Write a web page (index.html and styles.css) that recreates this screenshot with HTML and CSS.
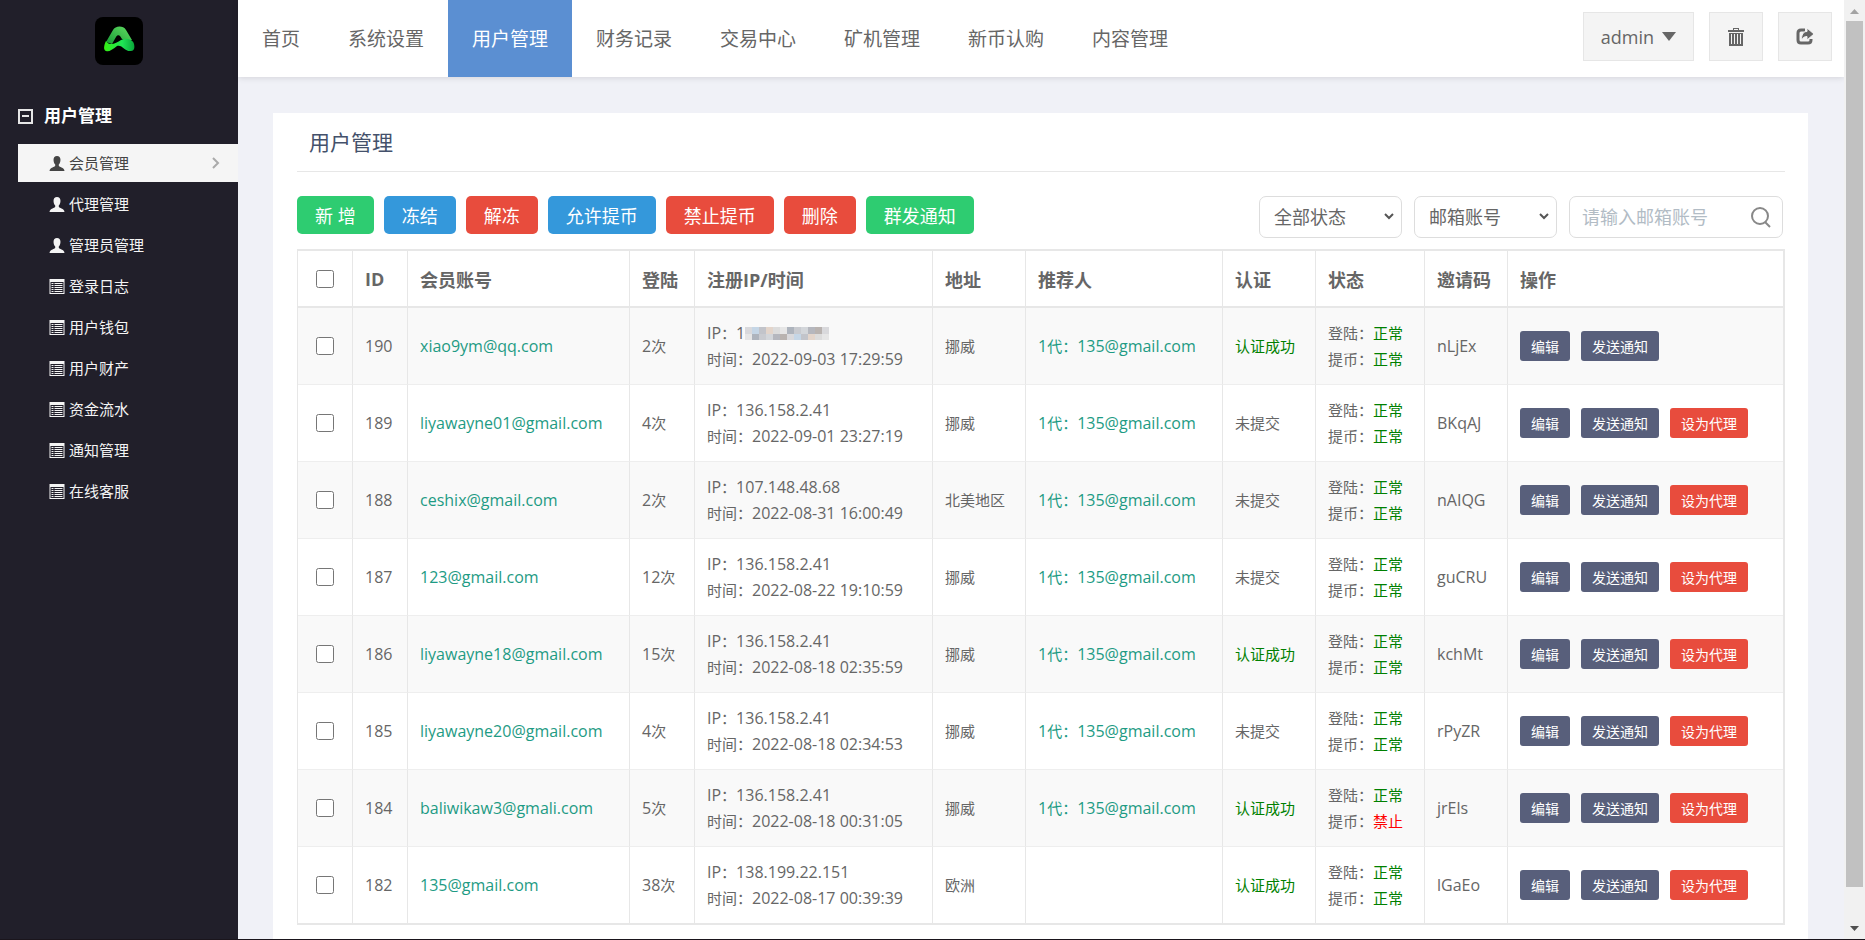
FILE: index.html
```html
<!DOCTYPE html>
<html lang="zh-CN">
<head>
    <meta charset="UTF-8">
    <meta name="viewport" content="width=device-width, initial-scale=1.0">
    <title>用户管理</title>
    <link rel="stylesheet" href="styles.css">
</head>
<body>
    <!-- Shared icons -->
    <svg class="sprite" aria-hidden="true">
        <symbol id="icon-user" viewBox="0 0 16 16">
            <path d="M8 0C5.600 0 4.300 1.700 4.300 4c0 2.300.7 4 1.800 5.100v1.300c-.4.9-1.600 1.300-2.900 1.800C1.500 12.900.2 13.600 0 16h16c-.2-2.400-1.500-3.100-3.200-3.800-1.300-.5-2.500-.9-2.900-1.800V9.100C11 8 11.700 6.300 11.700 4c0-2.300-1.300-4-3.700-4z"/>
        </symbol>
        <symbol id="icon-list" viewBox="0 0 15 15">
            <path fill-rule="evenodd" d="M0 0h15v15H0zM1 3v11h13V3zM2 4h2v1H2zM5 4h8v1H5zM2 6h2v1H2zM5 6h8v1H5zM2 8h2v1H2zM5 8h8v1H5zM2 10h2v1H2zM5 10h8v1H5zM2 12h2v1H2zM5 12h8v1H5z"/>
        </symbol>
    </svg>

    <div class="page">
        <aside class="sidebar">
            <a class="logo" href="#" aria-label="首页">
                <svg width="48" height="48" viewBox="0 0 48 48">
                    <defs>
                        <linearGradient id="top" x1="0" y1="1" x2="1" y2="0">
                            <stop offset="0" stop-color="#159a35"/>
                            <stop offset="1" stop-color="#62dc62"/>
                        </linearGradient>
                        <linearGradient id="wave" x1="0" y1="0" x2="1" y2="0">
                            <stop offset="0" stop-color="#35ee12"/>
                            <stop offset=".6" stop-color="#1fe556"/>
                            <stop offset="1" stop-color="#0aa53a"/>
                        </linearGradient>
                    </defs>
                    <rect width="48" height="48" rx="8" fill="#000"/>
                    <path d="M11 25 18 13C20 9 28 8 31 13L37 23C33 24 30 24 27 22L25 19C24 18 22 18 21 20L17 27Z" fill="url(#top)"/>
                    <path d="M11 24C15 30 21 26 26 23C31 21 38 22 39 27C40 31 39 34 36 34C30 35 27 27 22 29C17 33 14 35 11 34C8 33 9 28 11 24Z" fill="url(#wave)"/>
                </svg>
            </a>
            <h2 class="group">
                <svg width="15" height="15" viewBox="0 0 15 15"><path d="M1 1h13v13H1zM4 7h7" fill="none" stroke="#e6e6e6" stroke-width="2"/></svg>
                用户管理
            </h2>
            <nav class="menu">
                <a class="active" href="#"><svg><use href="#icon-user"/></svg>会员管理<svg class="arrow" viewBox="0 0 8 12"><path d="M1 1l5 5-5 5" fill="none" stroke="#aaa" stroke-width="2"/></svg></a>
                <a href="#"><svg><use href="#icon-user"/></svg>代理管理</a>
                <a href="#"><svg><use href="#icon-user"/></svg>管理员管理</a>
                <a href="#"><svg class="list"><use href="#icon-list"/></svg>登录日志</a>
                <a href="#"><svg class="list"><use href="#icon-list"/></svg>用户钱包</a>
                <a href="#"><svg class="list"><use href="#icon-list"/></svg>用户财产</a>
                <a href="#"><svg class="list"><use href="#icon-list"/></svg>资金流水</a>
                <a href="#"><svg class="list"><use href="#icon-list"/></svg>通知管理</a>
                <a href="#"><svg class="list"><use href="#icon-list"/></svg>在线客服</a>
            </nav>
        </aside>

        <div class="main">
            <header class="topbar">
                <nav class="topnav">
                    <a href="#">首页</a>
                    <a href="#">系统设置</a>
                    <a class="active" href="#">用户管理</a>
                    <a href="#">财务记录</a>
                    <a href="#">交易中心</a>
                    <a href="#">矿机管理</a>
                    <a href="#">新币认购</a>
                    <a href="#">内容管理</a>
                </nav>
                <div class="tools">
                    <button type="button" class="tool account">admin
                        <svg width="14" height="9" viewBox="0 0 14 9"><path d="M0 0h14L7 9z"/></svg>
                    </button>
                    <button type="button" class="tool" aria-label="清除缓存">
                        <svg width="16" height="18" viewBox="0 0 16 18">
                            <path fill-rule="evenodd" d="M5 0h6v2h5v2H0V2h5zM6 1v1h4V1zM1 5h14v13H1zM3 6v10h1V6zM6 6v10h1V6zM9 6v10h1V6zM12 6v10h1V6z"/>
                        </svg>
                    </button>
                    <button type="button" class="tool" aria-label="退出">
                        <svg width="18" height="17" viewBox="0 0 18 17">
                            <path d="M9 2H5C3 2 2 3 2 5v7c0 2 1 3 3 3h7c2 0 3-1 3-3v-1" fill="none" stroke="#666" stroke-width="3"/>
                            <path d="M11 0l7 6-7 6V8.500C8.500 8.500 7 9.500 5.500 12 5.500 7 7 3.500 11 3.500z" stroke="#f4f4f4"/>
                        </svg>
                    </button>
                </div>
            </header>

            <main class="content">
                <section class="panel">
                    <h1>用户管理</h1>
                    <div class="toolbar">
                        <div class="actions">
                            <button type="button" class="btn green">新 增</button>
                            <button type="button" class="btn blue">冻结</button>
                            <button type="button" class="btn red">解冻</button>
                            <button type="button" class="btn blue">允许提币</button>
                            <button type="button" class="btn red">禁止提币</button>
                            <button type="button" class="btn red">删除</button>
                            <button type="button" class="btn green">群发通知</button>
                        </div>
                        <form class="filters">
                            <div class="picker">
                                <select aria-label="状态"><option>全部状态</option></select>
                                <svg width="12" height="8" viewBox="0 0 12 8"><path d="M2 1l4 4 4-4"/></svg>
                            </div>
                            <div class="picker">
                                <select aria-label="查询字段"><option>邮箱账号</option></select>
                                <svg width="12" height="8" viewBox="0 0 12 8"><path d="M2 1l4 4 4-4"/></svg>
                            </div>
                            <div class="search">
                                <input type="text" placeholder="请输入邮箱账号" aria-label="邮箱账号">
                                <button type="submit" aria-label="搜索">
                                    <svg width="20" height="22" viewBox="0 0 20 22"><circle cx="9" cy="10" r="8"/><path d="M14 16l5 5"/></svg>
                                </button>
                            </div>
                        </form>
                    </div>
                    <table>
                        <thead>
                            <tr>
                                <th class="c-check"><input type="checkbox" aria-label="全选"></th>
                                <th class="c-id">ID</th>
                                <th class="c-account">会员账号</th>
                                <th class="c-login">登陆</th>
                                <th class="c-ip">注册IP/时间</th>
                                <th class="c-area">地址</th>
                                <th class="c-parent">推荐人</th>
                                <th class="c-auth">认证</th>
                                <th class="c-status">状态</th>
                                <th class="c-code">邀请码</th>
                                <th>操作</th>
                            </tr>
                        </thead>
                        <tbody id="members"></tbody>
                    </table>
                </section>
            </main>
        </div>

        <div class="scrollbar" aria-hidden="true">
            <svg width="9" height="5" viewBox="0 0 9 5"><path d="M0 5h9L4.500 0z" fill="#a3a3a3"/></svg>
            <div class="thumb"></div>
            <svg width="9" height="5" viewBox="0 0 9 5"><path d="M0 0h9L4.500 5z" fill="#505050"/></svg>
        </div>
    </div>
    <script src="script.js"></script>
</body>
</html>
```
FILE: styles.css
```css
* {
    box-sizing: border-box;
}
body {
    margin: 0;
    font-family: "Open Sans", "Noto Sans CJK SC", sans-serif;
    font-size: 15px;
    color: #666;
}
a {
    color: #1e9b84;
    text-decoration: none;
}
button, input, select {
    font-family: inherit;
    margin: 0;
}
.sprite {
    display: none;
}
.page {
    display: flex;
    height: 100vh;
    overflow: hidden;
    border-bottom: 1px solid #1a151c;
}

/* Sidebar */
.sidebar {
    flex: 0 0 238px;
    background-color: #211f2a;
}
.logo {
    display: flex;
    justify-content: center;
    padding-top: 17px;
    height: 77px;
}
.logo svg {
    display: block;
}
.group {
    display: flex;
    align-items: center;
    gap: 11px;
    margin: 24px 0 13px;
    padding-left: 18px;
    font-size: 17px;
    line-height: 30px;
    color: #fff;
}
.menu {
    display: grid;
    gap: 3px;
    padding-left: 18px;
}
.menu a {
    display: flex;
    align-items: center;
    gap: 4px;
    padding: 0 18px 0 31px;
    line-height: 38px;
    color: #f4f4f4;
}
.menu svg {
    width: 16px;
    height: 15px;
    fill: currentColor;
}
.menu .active {
    background-color: #f5f5f5;
    color: #444;
}
.menu .arrow {
    width: 8px;
    height: 12px;
    margin-left: auto;
}

/* Top bar */
.main {
    flex: 1;
    min-width: 0;
    background-color: #f0f1f7;
}
.topbar {
    display: flex;
    justify-content: space-between;
    height: 77px;
    background-color: #fff;
    box-shadow: 0 1px 6px rgba(0, 0, 0, 0.12);
}
.topnav {
    display: flex;
}
.topnav a {
    padding: 0 24px;
    font-size: 19px;
    line-height: 78px;
    color: #666;
}
.topnav .active {
    background-color: #5b8fd2;
    color: #fff;
}
.tools {
    display: flex;
    gap: 15px;
    padding: 12px 12px 16px 0;
}
.tool {
    display: flex;
    align-items: center;
    justify-content: center;
    width: 54px;
    background-color: #f4f4f4;
    border: 1px solid #e6e6e6;
    font-size: 18px;
    color: #666;
    fill: #666;
}
.tool.account {
    gap: 8px;
    width: 111px;
}

/* Panel */
.content {
    padding: 36px;
    padding-left: 35px;
}
.panel {
    padding: 0 23px 15px 24px;
    background-color: #fff;
}
h1 {
    margin: 0;
    padding: 0 12px;
    border-bottom: 1px solid #e7e7e7;
    font-size: 21px;
    font-weight: 400;
    line-height: 58px;
    color: #44516b;
}
.toolbar {
    display: flex;
    justify-content: space-between;
    align-items: flex-start;
    padding: 24px 2px 11px 0;
}
.actions {
    display: flex;
    gap: 10px;
}
.filters {
    display: flex;
    gap: 12px;
}
.btn {
    height: 38px;
    padding: 0 18px;
    border: 0;
    border-radius: 5px;
    font-size: 18px;
    color: #fff;
}
.green {
    background-color: #2ecc71;
}
.blue {
    background-color: #3498db;
}
.red {
    background-color: #e84c3d;
}
.picker, .search {
    display: grid;
    align-items: center;
    height: 42px;
    border: 1px solid #ddd;
    border-radius: 7px;
}
.picker {
    width: 143px;
}
.picker select, .picker svg {
    grid-area: 1 / 1;
}
.picker select {
    height: 40px;
    padding: 0 14px;
    appearance: none;
    border: 0;
    background-color: transparent;
    font-size: 18px;
    color: #666;
}
.picker svg {
    justify-self: end;
    margin-right: 6px;
    fill: none;
    stroke: #555;
    stroke-width: 2;
    pointer-events: none;
}
.search {
    grid-template-columns: 1fr 42px;
    width: 214px;
}
.search input {
    min-width: 0;
    height: 40px;
    padding: 0 0 0 12px;
    border: 0;
    background-color: transparent;
    font-size: 18px;
}
.search input::placeholder {
    color: #b2bcc5;
}
.search button {
    display: flex;
    justify-content: center;
    padding: 0;
    border: 0;
    background-color: transparent;
}
.search svg {
    fill: none;
    stroke: #888;
    stroke-width: 2;
}

/* Member table */
table {
    width: 100%;
    table-layout: fixed;
    border-collapse: separate;
    border-spacing: 0;
    border: solid #e7e7e7;
    border-width: 2px 2px 2px 1px;
}
th, td {
    padding: 0 0 0 12px;
    border-right: 1px solid #e7e7e7;
    text-align: left;
    white-space: nowrap;
}
th:last-child, td:last-child {
    border-right: 0;
}
th {
    height: 57px;
    border-bottom: 2px solid #e7e7e7;
    font-size: 18px;
}
td {
    height: 77px;
    border-bottom: 1px solid #eee;
    line-height: 26px;
}
tbody tr:nth-child(odd) {
    background-color: #f9f9f9;
}
tbody tr:last-child td {
    border-bottom: 0;
    height: 76px;
}
.c-check, td:first-child {
    padding-left: 0;
    text-align: center;
}
.c-check, .c-id {
    width: 55px;
}
.c-account {
    width: 222px;
}
.c-login {
    width: 65px;
}
.c-ip {
    width: 238px;
}
.c-area, .c-auth {
    width: 93px;
}
.c-parent {
    width: 197px;
}
.c-status {
    width: 109px;
}
.c-code {
    width: 83px;
}
input[type="checkbox"] {
    display: block;
    width: 18px;
    height: 18px;
    margin: 0 auto;
}
.latin {
    font-size: 16px;
}
.ok {
    color: #008000;
}
.bad {
    color: #f00;
}
.mosaic {
    width: 84px;
    height: 13px;
    vertical-align: -1px;
}
.ops {
    display: flex;
    gap: 11px;
}
.op {
    height: 30px;
    padding: 0 11px;
    border: 0;
    border-radius: 3px;
    background-color: #585f7b;
    font-size: 14px;
    color: #fff;
}
.op.red {
    background-color: #e84c3d;
}

/* Page scrollbar */
.scrollbar {
    display: flex;
    flex-direction: column;
    align-items: center;
    flex: 0 0 21px;
    padding: 9px 0 8px;
    background-color: #f1f1f1;
}
.thumb {
    flex: 1;
    width: 17px;
    margin: 7px 0 39px;
    background-color: #c1c1c1;
}
```
FILE: script.js
```javascript
// [id, account, logins, ip, time, area, parent, verified, withdraw allowed, invite code]
const members = [
    [190, 'xiao9ym@qq.com', 2, '', '2022-09-03 17:29:59', '挪威', '135@gmail.com', true, true, 'nLjEx'],
    [189, 'liyawayne01@gmail.com', 4, '136.158.2.41', '2022-09-01 23:27:19', '挪威', '135@gmail.com', false, true, 'BKqAJ'],
    [188, 'ceshix@gmail.com', 2, '107.148.48.68', '2022-08-31 16:00:49', '北美地区', '135@gmail.com', false, true, 'nAIQG'],
    [187, '123@gmail.com', 12, '136.158.2.41', '2022-08-22 19:10:59', '挪威', '135@gmail.com', false, true, 'guCRU'],
    [186, 'liyawayne18@gmail.com', 15, '136.158.2.41', '2022-08-18 02:35:59', '挪威', '135@gmail.com', true, true, 'kchMt'],
    [185, 'liyawayne20@gmail.com', 4, '136.158.2.41', '2022-08-18 02:34:53', '挪威', '135@gmail.com', false, true, 'rPyZR'],
    [184, 'baliwikaw3@gmali.com', 5, '136.158.2.41', '2022-08-18 00:31:05', '挪威', '135@gmail.com', true, false, 'jrEls'],
    [182, '135@gmail.com', 38, '138.199.22.151', '2022-08-17 00:39:39', '欧洲', '', true, true, 'lGaEo']
];

const shades = ['#d9d9dc', '#b5b7be', '#c9cbd0', '#e6e6e6', '#e3d5cb', '#c5d6e6', '#b9b3b0', '#d3d6da', '#aeb4bd', '#dcdcdc', '#c2c4ca'];
function mosaic() {
    let blocks = '';
    for (let i = 0; i < 12; i++) {
        for (let j = 0; j < 2; j++) {
            blocks += `<rect x="${i * 7}" y="${j * 7}" width="7" height="7" fill="${shades[(i * 5 + j * 3) % shades.length]}"/>`;
        }
    }
    return `1<svg class="mosaic" viewBox="0 0 84 13">${blocks}</svg>`;
}

function mark(ok) {
    return ok ? '<span class="ok">正常</span>' : '<span class="bad">禁止</span>';
}

const tbody = document.getElementById('members');
for (const [id, account, logins, ip, time, area, parent, verified, withdraw, code] of members) {
    tbody.innerHTML += `
        <tr>
            <td><input type="checkbox" aria-label="${id}"></td>
            <td class="latin">${id}</td>
            <td class="latin"><a href="#">${account}</a></td>
            <td><span class="latin">${logins}</span>次</td>
            <td><span class="latin">IP</span>：<span class="latin">${ip || mosaic()}</span><br>时间：<span class="latin">${time}</span></td>
            <td>${area}</td>
            <td>${parent ? `<a href="#"><span class="latin">1</span>代：<span class="latin">${parent}</span></a>` : ''}</td>
            <td>${verified ? '<span class="ok">认证成功</span>' : '未提交'}</td>
            <td>登陆：${mark(true)}<br>提币：${mark(withdraw)}</td>
            <td class="latin">${code}</td>
            <td>
                <div class="ops">
                    <button type="button" class="op">编辑</button>
                    <button type="button" class="op">发送通知</button>
                    ${id === 190 ? '' : '<button type="button" class="op red">设为代理</button>'}
                </div>
            </td>
        </tr>
    `;
}
```
